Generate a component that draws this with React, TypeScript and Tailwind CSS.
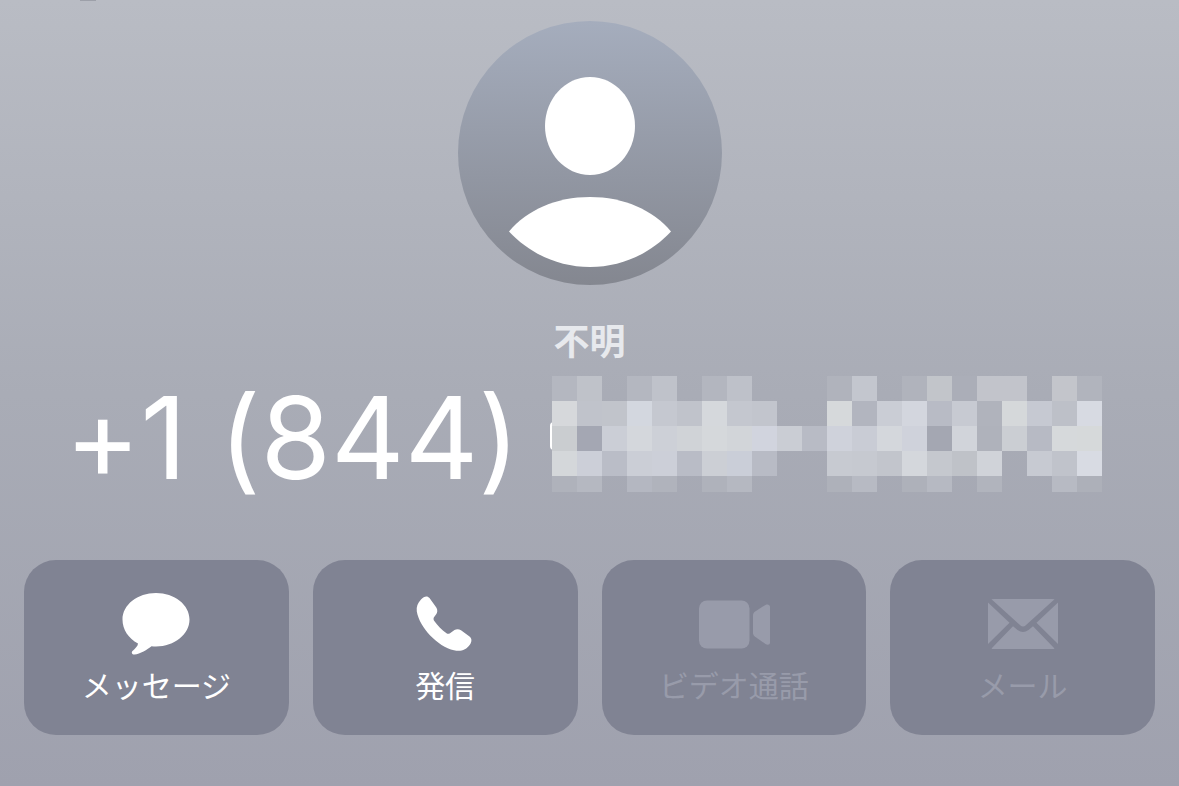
import type { ReactNode } from 'react';

// Pixelated part of the number, "" leaves the background visible
const mosaicRows = [
  ['b4b7c0', 'bfc2c9', '', 'b4b7c0', 'bfc2ca', '', 'b3b6bf', 'bec1c9', '', '', '', 'b0b3bc', 'c3c6ce', '', 'b0b3bc', 'c2c5ca', 'abaeb8', 'c2c4cb', 'c2c4cb', '', 'c3c5cb', 'b1b4bd'],
  ['d6d8db', 'c0c3cb', 'c1c4cb', 'd3d7df', 'c5c8d0', 'c0c3cb', 'd5d8dc', 'c4c7cf', 'c2c5cd', '', '', 'd6d9db', 'b2b5bf', 'cacdd5', 'd3d6de', 'b8bbc5', 'c7cad2', 'b0b3bc', 'd5d8da', 'c6c9d2', 'bdc0c8', 'd7dae2'],
  ['cacdd0', 'a4a7b3', 'cbced6', 'd4d7dc', 'cdd0d7', 'd0d3d7', 'd5d8db', 'd2d5d9', 'd1d4de', 'cacdd4', 'b8bbc5', 'cfd2db', 'c9ccd5', 'd4d7dc', 'cfd2db', 'a4a7b2', 'd1d4da', 'afb2bb', 'cbced3', 'b7bac4', 'd6d9db', 'd6d9da'],
  ['d4d7da', 'cccfd8', 'babdc7', 'cbced6', 'cccfd8', 'b9bcc6', 'cccfd5', 'caced8', 'b8bbc5', '', '', 'c7cad1', 'c6c9d0', 'c2c5cc', 'd4d7dc', 'c5c8ce', 'bfc2c8', 'd0d3d9', '', 'c7cad2', 'c0c3cb', 'd8dbe3'],
  ['afb2bb', 'b5b8c1', '', 'b4b7c1', 'b0b3bc', '', 'afb2bb', 'b5b8c1', '', '', '', 'aeb1ba', 'b7bac3', '', 'aeb1ba', 'b6b9c2', '', 'b1b4bd', '', '', 'b7bac3', 'adb0b9'],
];

const Avatar = () => (
  <svg className="size-[264px]" viewBox="0 0 264 264" aria-hidden="true">
    <defs>
      <linearGradient id="avatar" x1="0" y1="0" x2="0" y2="1">
        <stop offset="0" stopColor="#a5adbd" />
        <stop offset="1" stopColor="#848790" />
      </linearGradient>
    </defs>
    <circle cx="132" cy="132" r="132" fill="url(#avatar)" />
    <path fill="#fff" d="M132 56C157 56 177 78 177 105S157 154 132 154 87 132 87 105 107 56 132 56Z" />
    <path fill="#fff" d="M51 210.500C69 189 98 176 132 176S195 189 213 210.500C192 233 163 246 132 246S72 233 51 210.500Z" />
  </svg>
);

const MessageIcon = () => (
  <svg className="h-[62px] w-[68px]" viewBox="0 0 68 62" fill="currentColor" aria-hidden="true">
    <path d="M34 0C52.500 0 67.500 11.800 67.500 26.500S52.500 53.500 34 53.500C32.500 53.500 31 53.400 29.500 53.200C25.500 56.500 18 61 12.500 61.500C10 61.700 9 59.500 10.500 58C13 55.500 16 53 16 50.500C6.500 45.500 .5 36.500 .5 26.500C.5 11.800 15.500 0 34 0Z" />
  </svg>
);

const PhoneIcon = () => (
  <svg className="h-[62px] w-[58px]" viewBox="0 0 58 62" fill="currentColor" aria-hidden="true">
    <path d="M5 6.500C8 3 11.500 2.500 13.500 5L20.300 14.500C21.800 17 21.600 19.500 20 21.500L17.800 24.500C17.300 25.700 17.500 27 18.300 28C21.500 32.500 25.500 36.700 30.500 40.300C31.500 41 32.800 41 34 40.200L38.500 37C40.500 36 43 36 45 37.300L53.500 43.500C56 45.500 56 48.500 54 51.500C50 57.300 44.500 58.800 38 57.300C21.500 53.500 3.500 34.500 .8 18.500C.2 13.500 1.700 10 5 6.500Z" />
  </svg>
);

const VideoIcon = () => (
  <svg className="h-[62px] w-[72px]" viewBox="0 0 72 62" fill="currentColor" aria-hidden="true">
    <rect x="1" y="7.500" width="50.500" height="48" rx="8" />
    <path d="M55 22.500C55 20.800 55.500 19.800 56.800 18.700L67.500 11.900C69.800 10.800 72 11.800 72 14V49.500C72 51.700 69.800 52.500 67.500 51L56.800 43.500C55.500 42.500 55 41.500 55 39.800Z" />
  </svg>
);

const MailIcon = () => (
  <svg className="h-[62px] w-[72px]" viewBox="0 0 72 62" fill="currentColor" aria-hidden="true">
    <path d="M4.500 6.200Q5 6 7 6H65Q67 6 67.500 6.200L38.500 32.500Q36 34.500 33.500 32.500Z" />
    <path d="M1 9.500L22.500 29.700 1 51Z" />
    <path d="M71 9.500L49.500 29.700 71 51Z" />
    <path d="M4.500 55.500L26 33.200 30.500 37Q36 41 41.500 37L46 33.200 67.500 55.500Q67 56 65 56H7Q5 56 4.500 55.500Z" />
  </svg>
);

type ActionButtonProps = {
  label: string;
  icon: ReactNode;
  disabled?: boolean;
};

const ActionButton = ({ label, icon, disabled = false }: ActionButtonProps) => (
  <button
    type="button"
    disabled={disabled}
    className="flex h-[175px] flex-col items-center rounded-[32px] bg-[#808393] pt-[33px] text-white disabled:text-[#989baa]"
  >
    {icon}
    <span className="mt-2 text-[30px] leading-[46px]">{label}</span>
  </button>
);

const HiddenDigits = () => (
  <div className="relative h-[116px] w-[550px]">
    <span className="absolute top-[46px] -left-0.5 h-7 w-1 rounded-l-full bg-white" />
    <div className="relative grid h-full grid-cols-22 grid-rows-[25px_25px_25px_25px_16px]">
      {mosaicRows.flat().map((color, index) => (
        <span key={index} style={{ backgroundColor: color ? `#${color}` : undefined }} />
      ))}
    </div>
  </div>
);

const App = () => {
  return (
    <main
      lang="ja"
      className="flex min-h-screen flex-col items-center bg-linear-to-b from-[#b9bcc4] via-[#a9acb6] to-[#9fa1ae] font-['Inter','Noto_Sans_CJK_JP',sans-serif]"
    >
      <div className="ml-20 h-px w-4 self-start bg-[#9da0a9]" />
      <div className="mt-5">
        <Avatar />
      </div>
      <p className="mt-8 text-[36px] leading-[51px] font-bold text-[#e7e9ed]">不明</p>
      <h1 className="mt-2 flex items-start justify-center gap-8 pr-3 text-[114px] leading-[124px] whitespace-nowrap text-white [font-feature-settings:'calt'_0]">
        <span>+1 (844)</span>
        <HiddenDigits />
      </h1>
      <div className="mt-15 grid w-full grid-cols-4 gap-6 px-6 pb-12">
        <ActionButton label="メッセージ" icon={<MessageIcon />} />
        <ActionButton label="発信" icon={<PhoneIcon />} />
        <ActionButton label="ビデオ通話" icon={<VideoIcon />} disabled />
        <ActionButton label="メール" icon={<MailIcon />} disabled />
      </div>
    </main>
  );
};

export default App;
